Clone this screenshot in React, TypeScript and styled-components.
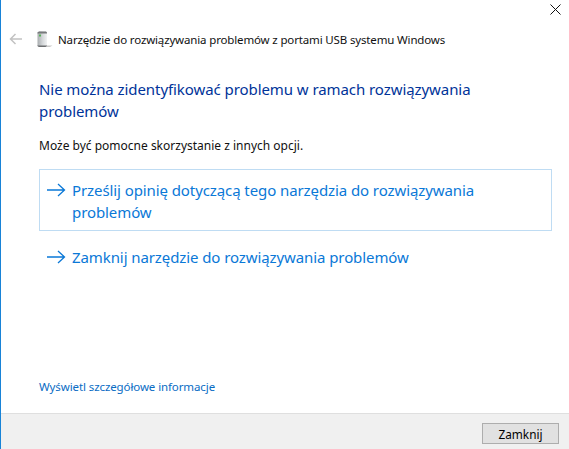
import React from "react";
import styled, { createGlobalStyle } from "styled-components";

const FONT = `"Noto Sans", "Open Sans", sans-serif`;

const GlobalStyle = createGlobalStyle`
  html, body { margin: 0; padding: 0; background: #fff; }
  body { font-family: ${FONT}; }
`;

const Window = styled.div`
  width: 569px;
  height: 449px;
  box-sizing: border-box;
  border-left: 1px solid #1883d7;
  display: flex;
  flex-direction: column;
  background: #fff;
  overflow: hidden;
`;

const TitleBar = styled.div`
  height: 28px;
  display: flex;
  justify-content: flex-end;
  padding-right: 5px;
`;

const CloseButton = styled.button`
  width: 18px;
  height: 18px;
  padding: 0;
  border: none;
  background: none;
  display: flex;
  align-items: center;
  justify-content: center;
`;

const Header = styled.div`
  display: flex;
  align-items: center;
  height: 22px;
  padding-left: 8px;
`;

const BackArrow = styled.svg`
  width: 13px;
  height: 12px;
  margin-right: 15px;
`;

const DeviceIcon = styled.svg`
  width: 16px;
  height: 18px;
  margin-right: 5px;
`;

const HeaderTitle = styled.div`
  font-size: 11.5px;
  letter-spacing: -0.15px;
  color: #111;
  white-space: nowrap;
`;

const Content = styled.div`
  flex: 1;
  display: flex;
  flex-direction: column;
  padding: 28px 17px 0 38px;
`;

const Heading = styled.h1`
  margin: 0;
  font-size: 15px;
  font-weight: 400;
  line-height: 22px;
  letter-spacing: -0.07px;
  color: #003399;
  width: 480px;
`;

const Hint = styled.p`
  margin: 16px 0 15px;
  font-size: 12px;
  line-height: 16px;
  color: #111;
`;

const Option = styled.div<{ $active?: boolean }>`
  display: flex;
  align-items: flex-start;
  box-sizing: border-box;
  width: 513px;
  padding: 9px 8px 7px 7px;
  border: 1px solid ${({ $active }) => ($active ? "#bfdcf3" : "transparent")};
  margin-bottom: 5px;
  color: #0a78d7;
  font-size: 15px;
  line-height: 22px;
  letter-spacing: -0.09px;
`;

const OptionArrow = styled.svg`
  flex: none;
  width: 19px;
  height: 14px;
  margin: 4px 6px 0 0;
`;

const OptionText = styled.span`
  display: block;
  max-width: 420px;
`;

const DetailsLink = styled.a`
  margin-top: auto;
  margin-bottom: 18px;
  font-size: 11.5px;
  line-height: 16px;
  letter-spacing: -0.1px;
  color: #0a6cc4;
`;

const Footer = styled.div`
  height: 35px;
  background: #f0f0f0;
  border-top: 1px solid #dfdfdf;
  display: flex;
  align-items: center;
  justify-content: flex-end;
  padding-right: 10px;
`;

const FooterButton = styled.button`
  width: 77px;
  height: 21px;
  margin-top: 4px;
  box-sizing: border-box;
  border: 1px solid #adadad;
  background: #e1e1e1;
  font-family: ${FONT};
  font-size: 11.8px;
  color: #000;
  padding: 0;
`;

const Arrow = () => (
  <OptionArrow viewBox="0 0 19 14">
    <path d="M0 7H17.5M11 1L17.5 7L11 13" fill="none" stroke="#0a78d7" strokeWidth="1.3" />
  </OptionArrow>
);

export default function App() {
  return (
    <Window>
      <GlobalStyle />
      <TitleBar>
        <CloseButton aria-label="Zamknij okno">
          <svg width="11" height="11" viewBox="0 0 11 11">
            <path d="M.5.5l10 10M10.5.5l-10 10" stroke="#111" strokeWidth="1" fill="none" />
          </svg>
        </CloseButton>
      </TitleBar>
      <Header>
        <BackArrow viewBox="0 0 13 12">
          <path d="M13 6H1.5M6.5 1L1.5 6L6.5 11" fill="none" stroke="#c2c2c2" strokeWidth="1.5" />
        </BackArrow>
        <DeviceIcon viewBox="0 0 16 18">
          <defs>
            <linearGradient id="tower" x1="0" y1="0" x2="1" y2="0">
              <stop offset="0" stopColor="#a9adb0" />
              <stop offset="0.55" stopColor="#d6d9db" />
              <stop offset="1" stopColor="#f1f2f3" />
            </linearGradient>
          </defs>
          <path d="M9 15.5H15.5L13 17H9Z" fill="#c9c9c9" />
          <path d="M0.5 2.5L2 1.5H9L10 2.5V16L8.5 17H2L0.5 16Z" fill="url(#tower)" />
          <path d="M0.5 2.5L2 1.5H9L10 2.5V3.5H0.5Z" fill="#77797b" />
          <path d="M0.5 15.5H10V16L8.5 17H2L0.5 16Z" fill="#6c6e70" />
          <rect x="2" y="4.5" width="2" height="2" fill="#58b258" />
        </DeviceIcon>
        <HeaderTitle>Narzędzie do rozwiązywania problemów z portami USB systemu Windows</HeaderTitle>
      </Header>
      <Content>
        <Heading>Nie można zidentyfikować problemu w ramach rozwiązywania problemów</Heading>
        <Hint>Może być pomocne skorzystanie z innych opcji.</Hint>
        <Option $active>
          <Arrow />
          <OptionText>Prześlij opinię dotyczącą tego narzędzia do rozwiązywania problemów</OptionText>
        </Option>
        <Option>
          <Arrow />
          <OptionText>Zamknij narzędzie do rozwiązywania problemów</OptionText>
        </Option>
        <DetailsLink>Wyświetl szczegółowe informacje</DetailsLink>
      </Content>
      <Footer>
        <FooterButton>Zamknij</FooterButton>
      </Footer>
    </Window>
  );
}
